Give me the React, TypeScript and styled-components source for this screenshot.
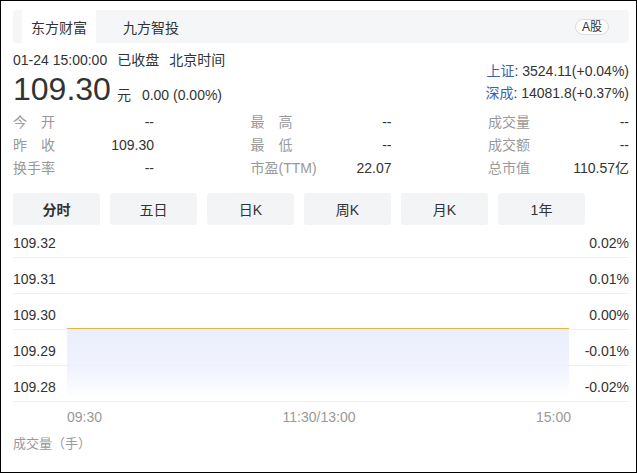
import React from "react";
import styled, { createGlobalStyle } from "styled-components";

const GlobalStyle = createGlobalStyle`
  html, body { margin: 0; padding: 0; background: #fff; }
  body { font-family: "Liberation Sans", "Noto Sans CJK SC", sans-serif; color: #333; }
  * { box-sizing: border-box; }
`;

const Frame = styled.div`
  width: 637px;
  height: 473px;
  border: 1px solid #000;
  padding: 9px 7px 0 12px;
  background: #fff;
  overflow: hidden;
`;

const TabBar = styled.div`
  display: flex;
  align-items: stretch;
  gap: 18px;
  height: 33px;
  padding: 0 20px 0 9px;
  background: #f5f6f8;
  border-radius: 3px;
`;

const Tab = styled.div<{ $active?: boolean }>`
  display: flex;
  align-items: center;
  padding: 0 9px;
  font-size: 14px;
  color: #333;
  background: ${(p) => (p.$active ? "#fff" : "transparent")};
`;

const Badge = styled.div`
  margin-left: auto;
  align-self: center;
  height: 16px;
  padding: 0 6px;
  border: 1px solid #dcdcdc;
  border-radius: 8px;
  background: #fff;
  font-size: 12px;
  line-height: 14px;
  color: #333;
`;

const Header = styled.div`
  display: flex;
  justify-content: space-between;
  margin-top: 7px;
`;

const LeftInfo = styled.div`
  display: flex;
  flex-direction: column;
`;

const Stamp = styled.div`
  display: flex;
  gap: 10px;
  font-size: 14px;
  line-height: 20px;
  height: 20px;
`;

const PriceRow = styled.div`
  display: flex;
  align-items: baseline;
  margin-top: 1px;
  height: 36px;
`;

const Price = styled.span`
  font-size: 32px;
  line-height: 36px;
  color: #333;
`;

const Unit = styled.span`
  margin-left: 6px;
  font-size: 14px;
`;

const Change = styled.span`
  margin-left: 11px;
  font-size: 14px;
`;

const RightInfo = styled.div`
  display: flex;
  flex-direction: column;
  align-items: flex-end;
  padding-top: 10px;
`;

const IndexLine = styled.div`
  font-size: 14px;
  line-height: 22px;
  color: #333;
`;

const IndexName = styled.span`
  color: #3d62ad;
`;

const Stats = styled.div`
  display: grid;
  grid-template-columns: repeat(3, 141px);
  justify-content: space-between;
  margin-top: 4px;
`;

const StatCell = styled.div`
  display: flex;
  justify-content: space-between;
  height: 23px;
  line-height: 23px;
  font-size: 14px;
`;

const StatLabel = styled.span`
  color: #999;
`;

const StatValue = styled.span`
  color: #333;
`;

const Periods = styled.div`
  display: flex;
  gap: 10px;
  margin-top: 13px;
`;

const PeriodButton = styled.div<{ $active?: boolean }>`
  width: 87px;
  height: 32px;
  display: flex;
  align-items: center;
  justify-content: center;
  background: #f3f4f6;
  border-radius: 3px;
  font-size: 14px;
  color: #333;
  font-weight: ${(p) => (p.$active ? 700 : 400)};
`;

const Chart = styled.div`
  position: relative;
`;

const ChartArt = styled.svg`
  position: absolute;
  left: 0;
  top: 0;
  width: 100%;
  height: 100%;
  z-index: 0;
`;

const GridRow = styled.div<{ $h: number }>`
  position: relative;
  z-index: 1;
  height: ${(p) => p.$h}px;
  display: flex;
  justify-content: space-between;
  align-items: flex-end;
  padding-bottom: 6px;
  border-bottom: 1px solid #f0f0f0;
  font-size: 14px;
  line-height: 16px;
  color: #333;
`;

const Axis = styled.div`
  display: flex;
  justify-content: space-between;
  align-items: center;
  height: 30px;
  margin: 0 58px 0 54px;
  font-size: 14px;
  color: #999;
`;

const VolumeTitle = styled.div`
  margin-top: 2px;
  font-size: 13px;
  line-height: 20px;
  color: #999;
`;

const stats: [string, string][] = [
  ["今\u3000开", "--"],
  ["最\u3000高", "--"],
  ["成交量", "--"],
  ["昨\u3000收", "109.30"],
  ["最\u3000低", "--"],
  ["成交额", "--"],
  ["换手率", "--"],
  ["市盈(TTM)", "22.07"],
  ["总市值", "110.57亿"],
];

const periods = ["分时", "五日", "日K", "周K", "月K", "1年"];

const grid: [string, string][] = [
  ["109.32", "0.02%"],
  ["109.31", "0.01%"],
  ["109.30", "0.00%"],
  ["109.29", "-0.01%"],
  ["109.28", "-0.02%"],
];

export default function App() {
  return (
    <>
      <GlobalStyle />
      <Frame>
        <TabBar>
          <Tab $active>东方财富</Tab>
          <Tab>九方智投</Tab>
          <Badge>A股</Badge>
        </TabBar>
        <Header>
          <LeftInfo>
            <Stamp>
              <span>01-24 15:00:00</span>
              <span>已收盘</span>
              <span>北京时间</span>
            </Stamp>
            <PriceRow>
              <Price>109.30</Price>
              <Unit>元</Unit>
              <Change>0.00 (0.00%)</Change>
            </PriceRow>
          </LeftInfo>
          <RightInfo>
            <IndexLine>
              <IndexName>上证</IndexName>: 3524.11(+0.04%)
            </IndexLine>
            <IndexLine>
              <IndexName>深成</IndexName>: 14081.8(+0.37%)
            </IndexLine>
          </RightInfo>
        </Header>
        <Stats>
          {stats.map(([l, v]) => (
            <StatCell key={l}>
              <StatLabel>{l}</StatLabel>
              <StatValue>{v}</StatValue>
            </StatCell>
          ))}
        </Stats>
        <Periods>
          {periods.map((p, i) => (
            <PeriodButton key={p} $active={i === 0}>
              {p}
            </PeriodButton>
          ))}
        </Periods>
        <Chart>
          <ChartArt viewBox="0 0 617 177" preserveAspectRatio="none">
            <defs>
              <linearGradient id="fillGrad" x1="0" y1="0" x2="0" y2="1">
                <stop offset="0" stopColor="#ebeffc" />
                <stop offset="0.55" stopColor="#f0f3fd" />
                <stop offset="1" stopColor="#ffffff" />
              </linearGradient>
            </defs>
            <rect x="54" y="105" width="503" height="68" fill="url(#fillGrad)" />
            <rect x="54" y="103" width="503" height="2" fill="#eeb243" />
          </ChartArt>
          {grid.map(([l, r], i) => (
            <GridRow key={l} $h={i === 0 ? 33 : 36}>
              <span>{l}</span>
              <span>{r}</span>
            </GridRow>
          ))}
        </Chart>
        <Axis>
          <span>09:30</span>
          <span>11:30/13:00</span>
          <span>15:00</span>
        </Axis>
        <VolumeTitle>成交量（手）</VolumeTitle>
      </Frame>
    </>
  );
}
